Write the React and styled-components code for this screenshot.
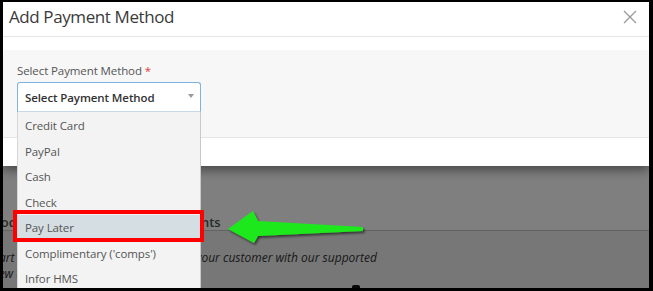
import React from "react";
import styled, { createGlobalStyle } from "styled-components";

const Global = createGlobalStyle`
  html, body { margin: 0; padding: 0; background: #000; }
  body { font-family: "Open Sans", "Noto Sans", Arial, sans-serif; }
  * { box-sizing: border-box; }
`;

const Frame = styled.div`
  position: relative;
  margin: 2px 4px 3px 3px;
  height: 286px;
  overflow: hidden;
  background: #fff;
`;

/* ---------- page behind the modal ---------- */
const Page = styled.div`
  padding-top: 212px;
  color: #444;
`;

const SectionTitle = styled.h3`
  margin: 0 0 0 -35px;
  font-size: 13px;
  font-weight: 600;
  line-height: 16px;
  white-space: nowrap;
  color: #555;
`;

const Rule = styled.div`
  border-top: 1px solid #c4c4c4;
`;

const Lower = styled.div`
  background: #eeeeee;
  padding-top: 19px;
  height: 80px;
`;

const Intro = styled.p`
  margin: 0 0 0 -14px;
  font-size: 12px;
  font-style: italic;
  line-height: 16px;
  white-space: nowrap;
  color: #333;
`;

const Logos = styled.div`
  display: flex;
  align-items: flex-start;
  margin-top: 3px;
  height: 20px;
`;

const Logo = styled.span`
  display: inline-block;
  width: ${(p) => p.$w}px;
  font-size: 15px;
  font-weight: 700;
  line-height: 18px;
  color: ${(p) => p.$c};
  white-space: nowrap;
`;

const Square = styled.span`
  display: inline-block;
  width: 8px;
  height: 12px;
  background: #111;
  border-radius: 2px;
  margin-right: 56px;
`;

const Backdrop = styled.div`
  position: absolute;
  inset: 0;
  background: rgba(0, 0, 0, 0.5);
`;

/* ---------- modal ---------- */
const Modal = styled.div`
  position: absolute;
  top: 0;
  left: 0;
  right: 0;
  background: #fff;
  box-shadow: 0 4px 10px rgba(0, 0, 0, 0.45);
`;

const Header = styled.div`
  height: 35px;
  display: flex;
  align-items: flex-start;
  justify-content: space-between;
  padding: 0 12px 0 6px;
  border-bottom: 1px solid #e5e5e5;
`;

const Title = styled.h2`
  margin: 0;
  font-size: 17px;
  font-weight: 500;
  letter-spacing: -0.4px;
  line-height: 30px;
  color: #3a3a3a;
`;

const CloseBtn = styled.button`
  border: 0;
  background: none;
  padding: 0;
  margin-top: 8px;
  width: 14px;
  height: 14px;
  display: flex;
  cursor: pointer;
`;

const Body = styled.div`
  padding-top: 13px;
`;

const FormArea = styled.div`
  background: #f7f7f7;
  height: 88px;
  padding: 12px 14px 0;
  border-bottom: 1px solid #e5e5e5;
`;

const Label = styled.label`
  display: block;
  font-size: 11.5px;
  letter-spacing: -0.1px;
  line-height: 17px;
  color: #555;
  margin-bottom: 3px;
`;

const Req = styled.span`
  color: #e03b3b;
`;

const SelectWrap = styled.div`
  position: relative;
  width: 184px;
`;

const SelectBox = styled.div`
  height: 30px;
  display: flex;
  align-items: center;
  justify-content: space-between;
  padding: 0 6px 0 7px;
  background: #fff;
  border: 1px solid #7fb2de;
  border-bottom-color: #c8d8e6;
  border-radius: 3px 3px 0 0;
  font-size: 11.5px;
  letter-spacing: -0.1px;
  font-weight: 600;
  color: #333;
`;

const Caret = styled.span`
  width: 0;
  height: 0;
  border-left: 3px solid transparent;
  border-right: 3px solid transparent;
  border-top: 4px solid #9a9a9a;
  margin-top: -2px;
`;

const Menu = styled.ul`
  position: absolute;
  top: 100%;
  left: 0;
  right: 0;
  margin: 0;
  padding: 1px 0 0;
  list-style: none;
  background: #f3f3f3;
  border-left: 1px solid #d6d6d6;
  border-right: 1px solid #c9c9c9;
  z-index: 2;
`;

const Item = styled.li`
  height: 25.5px;
  display: flex;
  align-items: center;
  padding-left: 7px;
  font-size: 11.5px;
  letter-spacing: -0.1px;
  color: #555;
  background: ${(p) => (p.$active ? "#d5dee2" : "transparent")};
`;

const Footer = styled.div`
  height: 28px;
`;

/* ---------- annotations ---------- */
const Highlight = styled.div`
  position: absolute;
  left: 10px;
  top: 208px;
  width: 191px;
  height: 32px;
  border: 4px solid #ff0000;
  z-index: 3;
`;

const Arrow = styled.svg`
  position: absolute;
  left: 219px;
  top: 203px;
  z-index: 3;
  overflow: visible;
`;

const items = [
  "Credit Card",
  "PayPal",
  "Cash",
  "Check",
  "Pay Later",
  "Complimentary ('comps')",
  "Infor HMS",
];

export default function App() {
  return (
    <>
      <Global />
      <Frame>
        <Page>
          <SectionTitle>Methods for Processing Client Payments</SectionTitle>
          <Rule />
          <Lower>
            <Intro>
              Start collecting payments directly from your customer with our supported
              <br />
              View the payment options below.
            </Intro>
            <Logos>
              <Logo $w={80} $c="#1a2a6a">Stripe</Logo>
              <Logo $w={117} $c="#3f8f2f">Square</Logo>
              <Logo $w={60} $c="#1a2a6a">Make</Logo>
              <Logo $w={92} $c="#1a2a6a">✣ Auth</Logo>
              <Square />
              <Logo $w={60} $c="#6a4fb0">Stripe</Logo>
            </Logos>
          </Lower>
        </Page>
        <Backdrop />
        <Modal>
          <Header>
            <Title>Add Payment Method</Title>
            <CloseBtn aria-label="Close">
              <svg width="14" height="14" viewBox="0 0 14 14">
                <path d="M1 1 L13 13 M13 1 L1 13" stroke="#9a9a9a" strokeWidth="1.3" fill="none" />
              </svg>
            </CloseBtn>
          </Header>
          <Body>
            <FormArea>
              <Label>
                Select Payment Method <Req>*</Req>
              </Label>
              <SelectWrap>
                <SelectBox>
                  <span>Select Payment Method</span>
                  <Caret />
                </SelectBox>
                <Menu>
                  {items.map((it) => (
                    <Item key={it} $active={it === "Pay Later"}>
                      {it}
                    </Item>
                  ))}
                </Menu>
              </SelectWrap>
            </FormArea>
            <Footer />
          </Body>
        </Modal>
        <Highlight />
        <Arrow width="150" height="45" viewBox="222 205 150 45">
          <defs>
            <filter id="sh" x="-10%" y="-30%" width="130%" height="170%">
              <feDropShadow dx="1.5" dy="2" stdDeviation="1.2" floodColor="#000" floodOpacity="0.55" />
            </filter>
          </defs>
          <polygon
            points="228,229 253,211 258,221 363,227 363,231 258,236 254,243"
            fill="#1fe81f"
            filter="url(#sh)"
          />
        </Arrow>
      </Frame>
    </>
  );
}
